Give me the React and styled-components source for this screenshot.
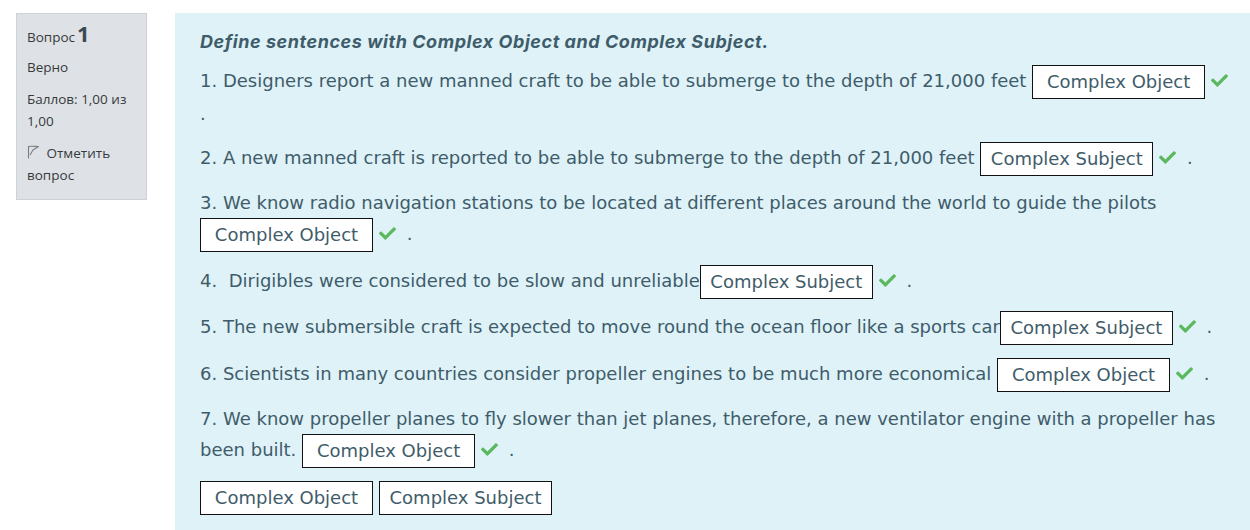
import React from 'react'
import styled, { createGlobalStyle } from 'styled-components'
import { FaCheck } from 'react-icons/fa'

const GlobalStyle = createGlobalStyle`
    html, body {
        margin: 0;
        padding: 0;
        overflow: hidden;
        background: #fff;
    }
    body {
        font-family: "DejaVu Sans", sans-serif;
    }
`

const questions = [
    { n: '1.', text: 'Designers report a new manned craft to be able to submerge to the depth of 21,000 feet ', answer: 'Complex Object' },
    { n: '2.', text: 'A new manned craft is reported to be able to submerge to the depth of 21,000 feet ', answer: 'Complex Subject' },
    { n: '3.', text: 'We know radio navigation stations to be located at different places around the world to guide the pilots ', answer: 'Complex Object' },
    { n: '4.', text: '\u00a0Dirigibles were considered to be slow and unreliable', answer: 'Complex Subject' },
    { n: '5.', text: 'The new submersible craft is expected to move round the ocean floor like a sports car', answer: 'Complex Subject' },
    { n: '6.', text: 'Scientists in many countries consider propeller engines to be much more economical ', answer: 'Complex Object' },
    { n: '7.', text: 'We know propeller planes to fly slower than jet planes, therefore, a new ventilator engine with a propeller has been built. ', answer: 'Complex Object' },
]

const Flag = () => (
    <svg width="13" height="14" viewBox="0 0 13 14" fill="none" stroke="#7a7f84" strokeWidth="1.1" strokeLinejoin="round">
        <path d="M1.5 1v12.5" />
        <path d="M1.5 1.5 C5 1 8 1.5 11.5 1.5 L6 5 L3 10" />
    </svg>
)

const App = () => {
    return (
        <>
        <GlobalStyle />
        <Page>
            <Info>
                <QNo>Вопрос<b>1</b></QNo>
                <InfoLine>Верно</InfoLine>
                <InfoLine>Баллов: 1,00 из 1,00</InfoLine>
                <InfoLine><Flag /> Отметить вопрос</InfoLine>
            </Info>

            <Formulation>
                <Title>Define sentences with Complex Object and Complex Subject.</Title>
                {questions.map((q) => (
                    <Sentence key={q.n}>
                        {q.n} {q.text}<Drop>{q.answer}</Drop><Tick><FaCheck /></Tick> .
                    </Sentence>
                ))}
                <Pool>
                    <Drop>Complex Object</Drop>
                    <Drop>Complex Subject</Drop>
                </Pool>
            </Formulation>
        </Page>
        </>
    )
}

const Page = styled.div`
    display: flex;
    align-items: flex-start;
    gap: 28px;
    padding: 13px 0 0 16px;
`

const Info = styled.div`
    flex: 0 0 131px;
    box-sizing: border-box;
    width: 131px;
    padding: 8px 10px 3px 10px;
    background: #dee2e6;
    border: 1px solid #cdd2d7;
    color: #373a3c;
    font-family: "Open Sans", sans-serif;
    font-size: 13.5px;
    line-height: 22px;
`

const QNo = styled.div`
    margin-bottom: 8px;

    b {
        font-size: 22px;
        font-weight: 700;
        margin-left: 2px;
        color: #3b4a52;
    }
`

const InfoLine = styled.div`
    margin-bottom: 10px;

    svg {
        vertical-align: -1px;
        margin-right: 3px;
    }
`

const Formulation = styled.div`
    flex: 0 0 1092px;
    box-sizing: border-box;
    min-height: 540px;
    padding: 14px 25px 0 25px;
    background: #def2f8;
    color: #3f5c6a;
    font-size: 18px;
    line-height: 30px;
`

const Title = styled.div`
    font-family: Inter, sans-serif;
    font-style: italic;
    font-weight: 700;
    letter-spacing: 0.55px;
    margin-bottom: 8px;
`

const Sentence = styled.p`
    margin: 0 0 12.5px 0;
`

const Drop = styled.span`
    display: inline-block;
    box-sizing: border-box;
    width: 173px;
    height: 34px;
    line-height: 32px;
    border: 1px solid #111;
    background: #fff;
    text-align: center;
    vertical-align: middle;
    white-space: nowrap;
`

const Tick = styled.span`
    display: inline-block;
    color: #5cb85c;
    font-size: 17px;
    margin: 0 5px 0 6px;
    vertical-align: -2px;
    line-height: 1;
`

const Pool = styled.div`
    display: flex;
    gap: 6px;
`

export default App
